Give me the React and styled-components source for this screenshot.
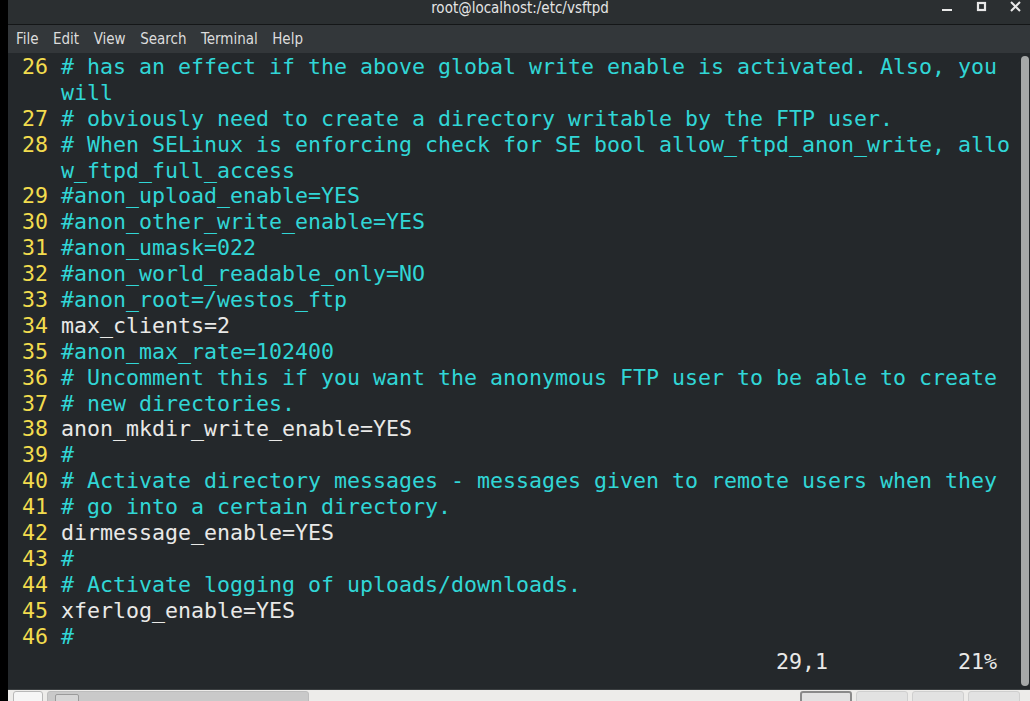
import React from "react";
import styled, { createGlobalStyle } from "styled-components";

const GlobalStyle = createGlobalStyle`
  html, body {
    margin: 0;
    padding: 0;
    background: #000;
    overflow: hidden;
  }
`;

const lines = [
  { n: "26", t: "# has an effect if the above global write enable is activated. Also, you", c: "comment" },
  { n: "", t: "will", c: "comment" },
  { n: "27", t: "# obviously need to create a directory writable by the FTP user.", c: "comment" },
  { n: "28", t: "# When SELinux is enforcing check for SE bool allow_ftpd_anon_write, allo", c: "comment" },
  { n: "", t: "w_ftpd_full_access", c: "comment" },
  { n: "29", t: "#anon_upload_enable=YES", c: "comment" },
  { n: "30", t: "#anon_other_write_enable=YES", c: "comment" },
  { n: "31", t: "#anon_umask=022", c: "comment" },
  { n: "32", t: "#anon_world_readable_only=NO", c: "comment" },
  { n: "33", t: "#anon_root=/westos_ftp", c: "comment" },
  { n: "34", t: "max_clients=2", c: "plain" },
  { n: "35", t: "#anon_max_rate=102400", c: "comment" },
  { n: "36", t: "# Uncomment this if you want the anonymous FTP user to be able to create", c: "comment" },
  { n: "37", t: "# new directories.", c: "comment" },
  { n: "38", t: "anon_mkdir_write_enable=YES", c: "plain" },
  { n: "39", t: "#", c: "comment" },
  { n: "40", t: "# Activate directory messages - messages given to remote users when they", c: "comment" },
  { n: "41", t: "# go into a certain directory.", c: "comment" },
  { n: "42", t: "dirmessage_enable=YES", c: "plain" },
  { n: "43", t: "#", c: "comment" },
  { n: "44", t: "# Activate logging of uploads/downloads.", c: "comment" },
  { n: "45", t: "xferlog_enable=YES", c: "plain" },
  { n: "46", t: "#", c: "comment" },
];

const menus = ["File", "Edit", "View", "Search", "Terminal", "Help"];

export default function App() {
  return (
    <>
      <GlobalStyle />
      <Screen>
        <LeftEdge />
        <Window>
          <TitleBar>
            <Title>root@localhost:/etc/vsftpd</Title>
            <Controls>
              <CtlButton aria-label="minimize">
                <svg width="11" height="11" viewBox="0 0 11 11">
                  <rect x="0" y="8" width="10" height="2" fill="#e8e8e8" />
                </svg>
              </CtlButton>
              <CtlButton aria-label="maximize">
                <svg width="11" height="11" viewBox="0 0 11 11">
                  <rect x="2" y="2" width="7" height="7" fill="none" stroke="#e8e8e8" strokeWidth="2.2" />
                </svg>
              </CtlButton>
              <CtlButton aria-label="close">
                <svg width="11" height="11" viewBox="0 0 11 11">
                  <path d="M1 1 L10 10 M10 1 L1 10" stroke="#e8e8e8" strokeWidth="2" />
                </svg>
              </CtlButton>
            </Controls>
          </TitleBar>
          <MenuBar>
            {menus.map((m) => (
              <MenuItem key={m}>{m}</MenuItem>
            ))}
          </MenuBar>
          <Body>
            <Terminal>
              {lines.map((l, i) => (
                <Row key={i}>
                  <LineNo>{l.n ? ` ${l.n} ` : "    "}</LineNo>
                  <Code $kind={l.c}>{l.t}</Code>
                </Row>
              ))}
              <Row>
                <Code $kind="plain">
                  {" ".repeat(59) + "29,1" + " ".repeat(10) + "21%"}
                </Code>
              </Row>
            </Terminal>
            <ScrollTrack>
              <ScrollThumb />
            </ScrollTrack>
          </Body>
          <Taskbar>
            <SmallBtn />
            <TaskEntry>
              <TaskIcon />
            </TaskEntry>
            <Spacer />
            <Workspace $active />
            <Workspace />
            <Workspace />
            <Workspace />
          </Taskbar>
        </Window>
      </Screen>
    </>
  );
}

const Screen = styled.div`
  width: 1030px;
  height: 701px;
  display: flex;
  background: #000;
  overflow: hidden;
`;

const LeftEdge = styled.div`
  width: 8px;
  flex: none;
  background: #000;
`;

const Window = styled.div`
  flex: 1;
  display: flex;
  flex-direction: column;
  min-width: 0;
`;

const TitleBar = styled.div`
  height: 24px;
  flex: none;
  background: #2b2f31;
  border-bottom: 1px solid #141617;
  display: flex;
  align-items: center;
  justify-content: center;
  position: relative;
`;

const Title = styled.div`
  font-family: "DejaVu Sans Condensed", "Liberation Sans Narrow", sans-serif;
  font-stretch: condensed;
  font-size: 15px;
  color: #e4e4e4;
  margin-top: -8px;
  margin-left: 2px;
`;

const Controls = styled.div`
  position: absolute;
  right: 9px;
  top: 1px;
  display: flex;
  gap: 23px;
`;

const CtlButton = styled.div`
  width: 11px;
  height: 11px;
  display: flex;
`;

const MenuBar = styled.div`
  height: 28px;
  flex: none;
  background: #33373a;
  display: flex;
  align-items: center;
  padding-left: 8px;
  gap: 14.5px;
`;

const MenuItem = styled.span`
  font-family: "DejaVu Sans Condensed", "Liberation Sans Narrow", sans-serif;
  font-stretch: condensed;
  font-size: 15px;
  color: #dcdcdc;
`;

const Body = styled.div`
  flex: 1;
  display: flex;
  background: #24282b;
  border-bottom: 1px solid #3a3e40;
`;

const Terminal = styled.div`
  flex: 1;
  padding: 1px 0 0 1px;
  font-family: "DejaVu Sans Mono", monospace;
  font-size: 21.6px;
  line-height: 25.9px;
  white-space: pre;
  overflow: hidden;
`;

const Row = styled.div`
  height: 25.9px;
`;

const LineNo = styled.span`
  color: #f2dc4e;
`;

const Code = styled.span`
  color: ${({ $kind }) => ($kind === "comment" ? "#31d6d6" : "#e9e9e7")};
`;

const ScrollTrack = styled.div`
  width: 8px;
  flex: none;
  padding: 3px 1px 3px 0;
  display: flex;
`;

const ScrollThumb = styled.div`
  flex: 1;
  width: 7px;
  border-radius: 4px;
  background: #a6a8a8;
`;

const Taskbar = styled.div`
  height: 10px;
  flex: none;
  background: #edecea;
  display: flex;
  align-items: flex-start;
  padding-top: 1px;
  gap: 4px;
`;

const SmallBtn = styled.div`
  width: 28px;
  height: 14px;
  margin-left: 5px;
  border: 1px solid #b8b8b8;
  border-radius: 3px;
  background: #f6f6f6;
`;

const TaskEntry = styled.div`
  width: 262px;
  height: 14px;
  border-radius: 3px;
  background: #c9c9c9;
  border: 1px solid #bdbdbd;
  padding: 2px 0 0 7px;
  box-sizing: border-box;
`;

const TaskIcon = styled.div`
  width: 22px;
  height: 12px;
  border: 1px solid #9a9a9a;
  border-radius: 2px;
  background: #d6d6d6;
`;

const Spacer = styled.div`
  flex: 1;
`;

const Workspace = styled.div`
  width: 52px;
  height: 14px;
  border-radius: 3px;
  background: #e2e2e2;
  border: ${({ $active }) => ($active ? "2px solid #8a8a8a" : "1px solid #cfcfcf")};
  box-sizing: border-box;
  &:last-child {
    margin-right: 10px;
  }
`;
